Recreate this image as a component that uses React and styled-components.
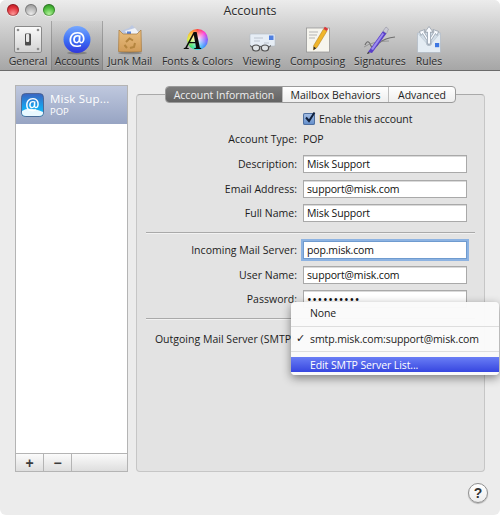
import React from "react"
import styled, { createGlobalStyle } from "styled-components"

const Global = createGlobalStyle`
  html, body { margin: 0; padding: 0; background: #fff; }
  body { font-family: "Open Sans", "Liberation Sans", sans-serif; font-size: 10.5px; letter-spacing: -0.1px; color: #1c1c1c; }
`

const Win = styled.div`
  width: 500px;
  height: 515px;
  display: flex;
  flex-direction: column;
  background: #ececec;
  border-radius: 6px;
  overflow: hidden;
  position: relative;
`
const Head = styled.div`
  height: 71px;
  flex: none;
  box-sizing: border-box;
  background: linear-gradient(#ececec 0, #d5d5d5 22px, #a6a6a6 100%);
  border-bottom: 1px solid #6b6b6b;
  display: flex;
  flex-direction: column;
`
const TitleBar = styled.div`
  height: 21px;
  flex: none;
  position: relative;
  display: flex;
  align-items: center;
  justify-content: center;
  font-size: 12.5px;
  letter-spacing: 0;
  color: #2a2a2a;
  text-shadow: 0 1px 0 #eee;
`
const Lights = styled.div`
  position: absolute;
  left: 7px;
  top: 4px;
  display: flex;
  gap: 6px;
`
const Light = styled.span`
  width: 12px;
  height: 12px;
  border-radius: 50%;
  box-shadow: inset 0 0 0 1px rgba(0, 0, 0, 0.25), 0 1px 0 rgba(255, 255, 255, 0.5);
  background: radial-gradient(circle at 50% 85%, ${(p) => p.$hi} 0, ${(p) => p.$c} 55%, ${(p) => p.$lo} 100%);
`
const Tools = styled.div`
  flex: 1;
  display: flex;
  padding-left: 5px;
`
const Tool = styled.div`
  width: ${(p) => p.$w}px;
  display: flex;
  flex-direction: column;
  align-items: center;
  box-sizing: border-box;
  ${(p) =>
    p.$on &&
    `background: linear-gradient(rgba(120,120,120,.05), rgba(90,90,90,.28));
     box-shadow: inset 1px 0 0 rgba(110,110,110,.45), inset -1px 0 0 rgba(110,110,110,.45);`}
`
const ToolIcon = styled.div`
  height: 31px;
  margin-top: 3px;
  width: 40px;
  display: flex;
  align-items: center;
  justify-content: center;
  filter: blur(0.35px);
`
const ToolLabel = styled.div`
  font-size: 10.5px;
  letter-spacing: 0;
  line-height: 13px;
  color: #2b2b2b;
  white-space: nowrap;
  text-shadow: 0 1px 0 rgba(255, 255, 255, 0.35);
`
const Wheel = styled.div`
  width: 21px;
  height: 21px;
  border-radius: 50%;
  position: relative;
  background: radial-gradient(circle, rgba(255, 255, 255, 0.95) 0, rgba(255, 255, 255, 0) 72%),
    conic-gradient(#ff3b30, #ff2fd0, #7a4dff, #2f8cff, #22d8e8, #2fe05a, #d8ef2c, #ffb020, #ff3b30);
`
const WheelLetter = styled.span`
  position: absolute;
  left: -2px;
  top: -2px;
  font-family: "Liberation Serif", serif;
  font-style: italic;
  font-weight: 700;
  font-size: 26px;
  line-height: 28px;
  color: #0c0c0c;
`

const Body = styled.div`
  flex: 1;
  display: flex;
  padding: 14px 15px 0 15px;
  gap: 8px;
`
const Side = styled.div`
  width: 113px;
  height: 387px;
  box-sizing: border-box;
  border: 1px solid #b4b4b4;
  background: #fff;
  display: flex;
  flex-direction: column;
`
const Account = styled.div`
  height: 38px;
  flex: none;
  background: linear-gradient(#bfc8de, #97a4c3);
  display: flex;
  align-items: center;
  padding-left: 5px;
  gap: 6px;
`
const AccountIcon = styled.div`
  width: 23px;
  height: 24px;
  filter: blur(0.25px);
`
const AccountText = styled.div`
  color: #fff;
  display: flex;
  flex-direction: column;
`
const AccountName = styled.div`
  font-size: 11.5px;
  line-height: 14px;
  letter-spacing: 0.2px;
`
const AccountKind = styled.div`
  font-size: 9.5px;
  line-height: 12px;
  letter-spacing: 0;
`
const SideSpace = styled.div`
  flex: 1;
`
const SideFoot = styled.div`
  height: 18px;
  flex: none;
  display: flex;
  box-sizing: border-box;
  border-top: 1px solid #b4b4b4;
  background: linear-gradient(#fbfbfb, #dedede);
`
const FootBtn = styled.div`
  width: ${(p) => (p.$grow ? "auto" : "27px")};
  flex: ${(p) => (p.$grow ? 1 : "none")};
  border-right: ${(p) => (p.$grow ? "none" : "1px solid #b4b4b4")};
  display: flex;
  align-items: center;
  justify-content: center;
  font-family: "Liberation Sans", sans-serif;
  font-weight: 700;
  font-size: 14px;
  line-height: 1;
  color: #3c3c3c;
`
const Panel = styled.div`
  width: 349px;
  height: 378px;
  margin-top: 9px;
  box-sizing: border-box;
  background: #e3e3e3;
  border: 1px solid #c6c6c6;
  border-top-color: #a9a9a9;
  border-radius: 4px;
  position: relative;
`
const Tabs = styled.div`
  width: 291px;
  height: 17px;
  box-sizing: border-box;
  margin: -9px auto 0;
  display: flex;
  background: linear-gradient(#ffffff, #eeeeee);
  border: 1px solid #9a9a9a;
  border-radius: 4px;
  overflow: hidden;
`
const Tab = styled.div`
  width: ${(p) => p.$w}px;
  flex: ${(p) => (p.$grow ? 1 : "none")};
  box-sizing: border-box;
  display: flex;
  align-items: center;
  justify-content: center;
  font-size: 10.5px;
  letter-spacing: 0;
  white-space: nowrap;
  color: ${(p) => (p.$on ? "#eeeeee" : "#1c1c1c")};
  background: ${(p) => (p.$on ? "linear-gradient(#7c7c7c, #636363)" : "none")};
  border-right: ${(p) => (p.$last ? "none" : "1px solid #bdbdbd")};
`
const CheckRow = styled.div`
  margin: 10px 0 0 166px;
  height: 11px;
  display: flex;
  align-items: center;
  gap: 4px;
`
const Check = styled.div`
  width: 12px;
  height: 12px;
  border-radius: 2px;
  background: linear-gradient(#a8c0e4, #5f8ccb);
  box-shadow: inset 0 0 0 1px #4f6f9f;
  position: relative;
`
const Mark = styled.svg`
  position: absolute;
  left: 1px;
  top: -2px;
`
const Row = styled.div`
  display: grid;
  grid-template-columns: 160px 164px;
  column-gap: 6px;
  align-items: center;
  height: ${(p) => p.$h || 18.5}px;
  margin-top: ${(p) => p.$mt ?? 6}px;
`
const Label = styled.div`
  text-align: right;
  white-space: nowrap;
  letter-spacing: 0.02px;
`
const Value = styled.div``
const Field = styled.input`
  width: 164px;
  height: 18px;
  box-sizing: border-box;
  margin: 0;
  padding: 0 0 0 3px;
  border: 1px solid ${(p) => (p.$focus ? "#6f9bcf" : "#a9a9a9")};
  background: #fff;
  outline: none;
  font: inherit;
  font-size: ${(p) => (p.type === "password" ? "12.5px" : "10.5px")};
  letter-spacing: ${(p) => (p.type === "password" ? "0.6px" : "-0.15px")};
  color: #111;
  box-shadow: ${(p) => (p.$focus ? "0 0 0 2px #8db3e2" : "inset 0 1px 0 #dadada")};
`
const Rule = styled.div`
  height: 1px;
  background: #a9a9a9;
  box-shadow: 0 1px 0 #f2f2f2;
  margin: ${(p) => p.$mt}px 9px ${(p) => p.$mb}px 9px;
`
const Menu = styled.div`
  position: absolute;
  left: 154px;
  top: 207px;
  width: 208px;
  height: 73px;
  box-sizing: border-box;
  background: rgba(250, 250, 250, 0.98);
  border-radius: 4px;
  box-shadow: 0 3px 10px rgba(0, 0, 0, 0.45);
  display: flex;
  flex-direction: column;
  padding-top: 3px;
  z-index: 2;
`
const MenuItem = styled.div`
  height: ${(p) => p.$h}px;
  flex: none;
  display: flex;
  align-items: center;
  padding-left: 19px;
  position: relative;
  white-space: nowrap;
  color: ${(p) => (p.$on ? "#fff" : "#1a1a1a")};
  background: ${(p) => (p.$on ? "linear-gradient(#6a7ef5, #3646e0)" : "none")};
`
const Tick = styled.span`
  position: absolute;
  left: 5px;
  font-family: "DejaVu Sans", sans-serif;
  font-size: 11px;
`
const MenuLine = styled.div`
  height: 1px;
  flex: none;
  background: #dedede;
  margin: ${(p) => p.$m};
`
const Foot = styled.div`
  height: 43px;
  flex: none;
  display: flex;
  justify-content: flex-end;
  padding: 11px 12px 0 0;
  box-sizing: border-box;
`
const Help = styled.div`
  width: 20px;
  height: 20px;
  box-sizing: border-box;
  border-radius: 50%;
  border: 1px solid #8f8f8f;
  background: linear-gradient(#ffffff, #ececec);
  box-shadow: 0 1px 1px rgba(0, 0, 0, 0.25);
  display: flex;
  align-items: center;
  justify-content: center;
  font-family: "Liberation Sans", sans-serif;
  font-weight: 700;
  font-size: 14px;
  color: #333;
`

const AtLetter = ({ x, y, size }) => (
  <text x={x} y={y} textAnchor="middle" fontFamily="'Open Sans', sans-serif" fontWeight="600" fontSize={size} fill="#fff">
    @
  </text>
)

const GeneralIcon = () => (
  <svg width="28" height="28" viewBox="0 0 28 28">
    <defs>
      <linearGradient id="gPlate" x1="0" y1="0" x2="0" y2="1">
        <stop offset="0" stopColor="#fbfbfb" />
        <stop offset="1" stopColor="#d2d2d2" />
      </linearGradient>
    </defs>
    <rect x="0.5" y="0.5" width="27" height="26" rx="1.5" fill="url(#gPlate)" stroke="#8a8a8a" />
    {[[4, 4], [24, 4], [4, 23], [24, 23]].map(([x, y]) => (
      <circle key={x + "-" + y} cx={x} cy={y} r="1.3" fill="#8d8d8d" />
    ))}
    <rect x="11" y="7.5" width="6" height="12" rx="1" fill="#4d4d4d" />
    <rect x="12" y="8" width="3.2" height="8" rx="1" fill="#e8e8e8" />
  </svg>
)

const AccountsIcon = () => (
  <svg width="30" height="30" viewBox="0 0 30 30">
    <defs>
      <linearGradient id="gBlue" x1="0" y1="0" x2="0" y2="1">
        <stop offset="0" stopColor="#76a8ff" />
        <stop offset="0.55" stopColor="#3a6cf4" />
        <stop offset="1" stopColor="#2f36dc" />
      </linearGradient>
    </defs>
    <ellipse cx="15" cy="28" rx="10" ry="1.5" fill="#555" opacity="0.45" />
    <circle cx="15" cy="14.5" r="13.5" fill="url(#gBlue)" />
    <AtLetter x="15" y="21" size="19" />
  </svg>
)

const JunkIcon = () => (
  <svg width="28" height="30" viewBox="0 0 28 30">
    <defs>
      <linearGradient id="gBag" x1="0" y1="0" x2="0" y2="1">
        <stop offset="0" stopColor="#eabf80" />
        <stop offset="1" stopColor="#d09b58" />
      </linearGradient>
    </defs>
    <path d="M5 6 L13 3 L16 0 L21 5 L24 9 L5 10 Z" fill="#bcc8e2" />
    <path d="M9 6 L19 3 L23 8 L13 11 Z" fill="#f1f3f7" />
    <rect x="11" y="6.5" width="4" height="3" fill="#5c84d8" />
    <path d="M3 5 L7 9 L21 9 L25 5 L25.5 26.5 Q14 28 2.5 26.5 Z" fill="url(#gBag)" stroke="#a87a3e" strokeWidth="0.7" />
    <path d="M10 17 L13.5 13.5 L17 15.5 M19 18 L18 22 L14 23 M11 23 L8.5 20" fill="none" stroke="#b4853f" strokeWidth="2" />
    <ellipse cx="14" cy="28" rx="12" ry="1.3" fill="#555" opacity="0.45" />
  </svg>
)

const FontsIcon = () => (
  <Wheel>
    <WheelLetter>A</WheelLetter>
  </Wheel>
)

const ViewingIcon = () => (
  <svg width="30" height="24" viewBox="0 0 30 24" style={{ marginTop: 8 }}>
    <rect x="3" y="2" width="25" height="12" rx="1" fill="#e6edf5" stroke="#b3bcc7" strokeWidth="0.6" />
    <rect x="22" y="3.5" width="4.5" height="4.5" fill="#4f7fe0" />
    <path d="M7 6 H16 M7 9 H13 M17 11 H22" stroke="#bcc4cf" strokeWidth="1" />
    <ellipse cx="9" cy="16" rx="3.6" ry="3" fill="#dfe3e6" stroke="#4f4f4f" strokeWidth="1.2" />
    <ellipse cx="18" cy="16" rx="3.6" ry="3" fill="#dfe3e6" stroke="#4f4f4f" strokeWidth="1.2" />
    <path d="M12.5 15 Q13.5 14 14.5 15 M5.4 15.5 L3 13.5 M21.6 15.5 L24 13.5" fill="none" stroke="#4f4f4f" strokeWidth="1" />
  </svg>
)

const ComposingIcon = () => (
  <svg width="26" height="28" viewBox="0 0 26 28">
    <rect x="1.5" y="2" width="23" height="24" fill="#f6f5ee" stroke="#8f8f8f" strokeWidth="0.7" />
    <path d="M4 6 H13 M4 9 H12 M4 12 H10" stroke="#b5b5b5" strokeWidth="1" />
    <path d="M18.5 3 L22 5 L12 21.5 L8.5 24 L8.7 19.5 Z" fill="#f0b52a" stroke="#a87a1a" strokeWidth="0.5" />
    <path d="M8.5 24 L8.7 20.5 L11.2 22.2 Z" fill="#2b2b2b" />
    <path d="M18.5 3 L19.8 0.7 L23.2 2.8 L22 5 Z" fill="#d8383a" />
  </svg>
)

const SignaturesIcon = () => (
  <svg width="34" height="28" viewBox="0 0 34 28">
    <path d="M2 19 Q5 12 8 20 Q12 24 16 17 Q22 12 32 11" fill="none" stroke="#6f6f6f" strokeWidth="1.2" />
    <path d="M1 21 Q10 15 26 15" fill="none" stroke="#8a8a8a" strokeWidth="0.8" />
    <path d="M5 26 L20 5 L23.5 7.5 L9 27 Z" fill="#5a3fc8" />
    <path d="M8 23 L19.5 7 L21 8 L10 24 Z" fill="#9d8ef0" />
    <path d="M20 5 L23 1 L25.5 3 L23.5 7.5 Z" fill="#c9c9d4" stroke="#77778a" strokeWidth="0.4" />
    <path d="M5 26 L4 28 L7 27 Z" fill="#222" />
  </svg>
)

const RulesIcon = () => (
  <svg width="26" height="28" viewBox="0 0 26 28">
    <path d="M1.5 7 H24.5 V26.5 H1.5 Z" fill="#e4ecf3" stroke="#a8b4bf" strokeWidth="0.6" />
    <path d="M1.5 7 L13 20 L24.5 7" fill="#d1dce6" stroke="#b5c0ca" strokeWidth="0.5" />
    <rect x="19" y="17" width="4.2" height="4.2" fill="#3f78e2" />
    <g fill="#fafcff" stroke="#8b98a6" strokeWidth="0.7" strokeLinejoin="round">
      <path d="M3.5 5.5 L9 3.5 L8 6 L13 14 L13 19 L11 19 L11 14.5 L6.5 7.5 L5 9.5 Z" />
      <path d="M22.5 5.5 L17 3.5 L18 6 L13 14 L13 19 L15 19 L15 14.5 L19.5 7.5 L21 9.5 Z" />
      <path d="M13 0.5 L17 6 L14.5 6 L14.5 18 L11.5 18 L11.5 6 L9 6 Z" />
    </g>
  </svg>
)

const MailAccountIcon = () => (
  <svg width="23" height="24" viewBox="0 0 23 24">
    <defs>
      <linearGradient id="gTile" x1="0" y1="0" x2="0" y2="1">
        <stop offset="0" stopColor="#3a63c0" />
        <stop offset="0.6" stopColor="#17a4ee" />
        <stop offset="1" stopColor="#18c0f4" />
      </linearGradient>
    </defs>
    <rect x="0.5" y="0.5" width="22" height="23" rx="4" fill="url(#gTile)" stroke="#465a86" strokeWidth="0.8" />
    <path d="M1 18 Q8 13 22 19 L22 20 Q22 23 18 23 L5 23 Q1 23 1 20 Z" fill="#e9f8ff" />
    <AtLetter x="11.5" y="17" size="16" />
  </svg>
)

const tools = [
  { name: "General", w: 46, Icon: GeneralIcon },
  { name: "Accounts", w: 52, Icon: AccountsIcon, on: true },
  { name: "Junk Mail", w: 54, Icon: JunkIcon },
  { name: "Fonts & Colors", w: 81, Icon: FontsIcon },
  { name: "Viewing", w: 47, Icon: ViewingIcon },
  { name: "Composing", w: 65, Icon: ComposingIcon },
  { name: "Signatures", w: 60, Icon: SignaturesIcon },
  { name: "Rules", w: 38, Icon: RulesIcon },
]

const App = () => {
  return (
    <>
      <Global />
      <Win>
        <Head>
          <TitleBar>
            <Lights>
              <Light $c="#e0323a" $hi="#ff9a9a" $lo="#a80f18" />
              <Light $c="#b4b4b4" $hi="#ececec" $lo="#8a8a8a" />
              <Light $c="#4dbb3c" $hi="#b2f29a" $lo="#24801c" />
            </Lights>
            Accounts
          </TitleBar>
          <Tools>
            {tools.map(({ name, w, Icon, on }) => (
              <Tool key={name} $w={w} $on={on}>
                <ToolIcon>
                  <Icon />
                </ToolIcon>
                <ToolLabel>{name}</ToolLabel>
              </Tool>
            ))}
          </Tools>
        </Head>
        <Body>
          <Side>
            <Account>
              <AccountIcon>
                <MailAccountIcon />
              </AccountIcon>
              <AccountText>
                <AccountName>Misk Sup...</AccountName>
                <AccountKind>POP</AccountKind>
              </AccountText>
            </Account>
            <SideSpace />
            <SideFoot>
              <FootBtn>+</FootBtn>
              <FootBtn>−</FootBtn>
              <FootBtn $grow />
            </SideFoot>
          </Side>
          <Panel>
            <Tabs>
              <Tab $w={117} $on>Account Information</Tab>
              <Tab $w={106}>Mailbox Behaviors</Tab>
              <Tab $grow $last>Advanced</Tab>
            </Tabs>
            <CheckRow>
              <Check>
                <Mark width="13" height="13" viewBox="0 0 13 13">
                  <path d="M2 6.5 L5 10 L10.5 1.5" fill="none" stroke="#10203c" strokeWidth="2" />
                </Mark>
              </Check>
              Enable this account
            </CheckRow>
            <Row $h={16} $mt={7}>
              <Label>Account Type:</Label>
              <Value>POP</Value>
            </Row>
            <Row $mt={8}>
              <Label>Description:</Label>
              <Field readOnly value="Misk Support" />
            </Row>
            <Row>
              <Label>Email Address:</Label>
              <Field readOnly value="support@misk.com" />
            </Row>
            <Row>
              <Label>Full Name:</Label>
              <Field readOnly value="Misk Support" />
            </Row>
            <Rule $mt={9.5} $mb={8} />
            <Row $mt={0}>
              <Label>Incoming Mail Server:</Label>
              <Field readOnly $focus value="pop.misk.com" />
            </Row>
            <Row>
              <Label>User Name:</Label>
              <Field readOnly value="support@misk.com" />
            </Row>
            <Row>
              <Label>Password:</Label>
              <Field readOnly type="password" value="misksuppor" />
            </Row>
            <Rule $mt={9.5} $mb={12} />
            <Row $h={16} $mt={0}>
              <Label>Outgoing Mail Server (SMTP):</Label>
            </Row>
            <Menu>
              <MenuItem $h={15}>None</MenuItem>
              <MenuLine $m="6px 0 4px" />
              <MenuItem $h={15}>
                <Tick>✓</Tick>
                smtp.misk.com:support@misk.com
              </MenuItem>
              <MenuLine $m="5px 0 5px" />
              <MenuItem $h={15} $on>Edit SMTP Server List...</MenuItem>
            </Menu>
          </Panel>
        </Body>
        <Foot>
          <Help>?</Help>
        </Foot>
      </Win>
    </>
  )
}

export default App
